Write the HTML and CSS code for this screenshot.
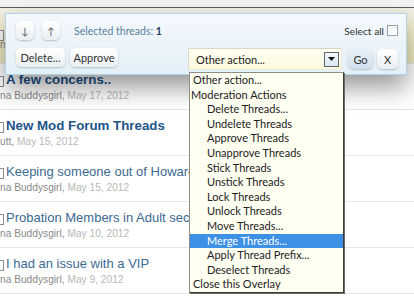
FILE: index.html
```html
<!DOCTYPE html>
<html>
<head>
<meta charset="utf-8">
<link rel="stylesheet" href="styles.css">
</head>
<body>
<div class="page">
  <div class="topbar"></div>
  <div class="threads">
    <div class="row selected">
      <span class="cb"></span>
      <div class="title"></div>
      <div class="meta"><span class="author">n</span></div>
    </div>
    <div class="row">
      <span class="cb"></span>
      <div class="title bold">A few concerns..</div>
      <div class="meta"><span class="author">na Buddysgirl,</span> <span class="date">May 17, 2012</span></div>
    </div>
    <div class="row">
      <span class="cb"></span>
      <div class="title bold">New Mod Forum Threads</div>
      <div class="meta"><span class="author">utt,</span> <span class="date">May 15, 2012</span></div>
    </div>
    <div class="row">
      <span class="cb"></span>
      <div class="title">Keeping someone out of Howard</div>
      <div class="meta"><span class="author">na Buddysgirl,</span> <span class="date">May 15, 2012</span></div>
    </div>
    <div class="row">
      <span class="cb"></span>
      <div class="title">Probation Members in Adult section</div>
      <div class="meta"><span class="author">na Buddysgirl,</span> <span class="date">May 10, 2012</span></div>
    </div>
    <div class="row">
      <span class="cb"></span>
      <div class="title">I had an issue with a VIP</div>
      <div class="meta"><span class="author">na Buddysgirl,</span> <span class="date">May 9, 2012</span></div>
    </div>
  </div>

  <div class="modpanel">
    <div class="prow">
      <button class="btn sq">&#8595;</button>
      <button class="btn sq">&#8593;</button>
      <span class="selcount">Selected threads: <b>1</b></span>
      <label class="selall">Select all <span class="chk"></span></label>
    </div>
    <div class="prow second">
      <button class="btn del">Delete...</button>
      <button class="btn appr">Approve</button>
      <div class="select">
        <span class="seltext">Other action...</span>
        <span class="arrow"><svg width="7" height="4" viewBox="0 0 7 4"><path d="M0 0h7L3.5 4z" fill="#111"/></svg></span>
      </div>
      <button class="btn go">Go</button>
      <button class="btn x">X</button>
    </div>
  </div>

  <ul class="dropdown">
    <li>Other action...</li>
    <li class="group">Moderation Actions</li>
    <li class="opt">Delete Threads...</li>
    <li class="opt">Undelete Threads</li>
    <li class="opt">Approve Threads</li>
    <li class="opt">Unapprove Threads</li>
    <li class="opt">Stick Threads</li>
    <li class="opt">Unstick Threads</li>
    <li class="opt">Lock Threads</li>
    <li class="opt">Unlock Threads</li>
    <li class="opt">Move Threads...</li>
    <li class="opt hl">Merge Threads...</li>
    <li class="opt">Apply Thread Prefix...</li>
    <li class="opt">Deselect Threads</li>
    <li>Close this Overlay</li>
  </ul>
</div>
</body>
</html>
```

FILE: styles.css
```css
html, body {
  margin: 0;
  padding: 0;
  background: #fff;
}
.page {
  position: relative;
  width: 414px;
  height: 300px;
  overflow: hidden;
  font-family: Lato, "Liberation Sans", sans-serif;
}
.topbar {
  height: 7px;
  background: #f3f3f3;
  border-bottom: 1px solid #5e5e5e;
}
.threads {
  display: flex;
  flex-direction: column;
}
.row {
  position: relative;
  padding: 7px 0 6px 6px;
  box-sizing: border-box;
  height: 46px;
  border-bottom: 1px solid #e3e8ec;
}
.row.selected {
  height: 56px;
  background: linear-gradient(#f1f1ea, #f8f3cf 40%, #f6f0c4);
  padding-top: 30px;
}
.cb {
  position: absolute;
  left: -7px;
  top: 12px;
  width: 9px;
  height: 9px;
  border: 1px solid #8a8f94;
  background: #fff;
}
.row.selected .cb { top: 22px; }
.title {
  font-family: "Liberation Sans", Arial, sans-serif;
  font-size: 13px;
  line-height: 18px;
  color: #3c6a92;
  white-space: nowrap;
}
.title.bold {
  font-size: 13.3px;
  font-weight: bold;
  color: #22548a;
}
.meta {
  font-family: "Liberation Sans", Arial, sans-serif;
  margin-left: -6px;
  font-size: 10.2px;
  line-height: 14px;
  white-space: nowrap;
}
.author { color: #8a8a8a; }
.date { color: #b8b8b8; }

/* overlay panel */
.modpanel {
  position: absolute;
  left: 5px;
  top: 13px;
  width: 402px;
  height: 62px;
  box-sizing: border-box;
  padding: 7px 8px 0 10px;
  border: 1px solid #b4d2e6;
  background: linear-gradient(#f3f8fc, #e4f0f8);
  box-shadow: 0 12px 26px rgba(0, 0, 0, 0.42);
  display: flex;
  flex-direction: column;
  gap: 8px;
  font-size: 11px;
}
.prow {
  display: flex;
  align-items: center;
  height: 19px;
}
.btn {
  font-family: Lato, "Liberation Sans", sans-serif;
  font-size: 11px;
  color: #333;
  height: 19px;
  padding: 0;
  border: none;
  border-radius: 5px;
  background: linear-gradient(#ffffff, #e9eef2);
  box-shadow: 0 1px 2px rgba(0, 0, 0, 0.22);
  display: flex;
  align-items: center;
  justify-content: center;
}
.btn.sq { width: 18px; margin-right: 8px; font-size: 10px; color: #555; }
.selcount {
  margin-left: 6px;
  color: #5b7e9c;
  font-size: 10.5px;
}
.selcount b { color: #1f3f5c; }
.selall {
  margin-left: auto;
  display: flex;
  align-items: center;
  color: #333;
  font-size: 10.2px;
  gap: 3px;
}
.chk {
  width: 9px;
  height: 9px;
  border: 1px solid #9aa0a6;
  background: linear-gradient(#f2f2f2, #fff);
}
.second { gap: 5px; }
.btn.del { width: 49px; }
.btn.appr { width: 48px; }
.select {
  margin-left: 65px;
  width: 154px;
  height: 22px;
  box-sizing: border-box;
  margin-top: 3px;
  border: 1px solid #d8d8c4;
  border-right-color: #ecebdc;
  border-bottom-color: #ecebdc;
  background: linear-gradient(#fefef4, #fcf9da);
  display: flex;
  align-items: center;
  padding-left: 7px;
  font-size: 11px;
  color: #222;
}
.seltext { flex: 1; }
.arrow {
  width: 13px;
  height: 13px;
  margin-right: 2px;
  border: 1px solid #5c6670;
  background: linear-gradient(#f4f8fb, #dce7f0);
  display: flex;
  align-items: center;
  justify-content: center;
}
.btn.go {
  margin-left: 1px;
  width: 25px;
  height: 20px;
  margin-top: 3px;
  background: linear-gradient(#e9f2f9, #cfe0ee);
}
.btn.x {
  margin-left: -1px;
  width: 21px;
  height: 20px;
  margin-top: 3px;
}

/* dropdown list */
.dropdown {
  position: absolute;
  left: 189px;
  top: 72px;
  width: 155px;
  box-sizing: border-box;
  margin: 0;
  padding: 0;
  list-style: none;
  background: #fffff2;
  border: 1px solid #8e8e86;
  border-right-color: #3c3c3c;
  border-bottom-color: #3c3c3c;
  box-shadow: 1px 1px 0 #6a6a6a;
  font-size: 11px;
  color: #222;
}
.dropdown li {
  height: 14.6px;
  line-height: 14.6px;
  padding-left: 3px;
  white-space: nowrap;
}
.dropdown li.group { padding-left: 1px; }
.dropdown li.opt { padding-left: 17px; }
.dropdown li.hl {
  background: #3c90e6;
  color: #fff;
}
```
